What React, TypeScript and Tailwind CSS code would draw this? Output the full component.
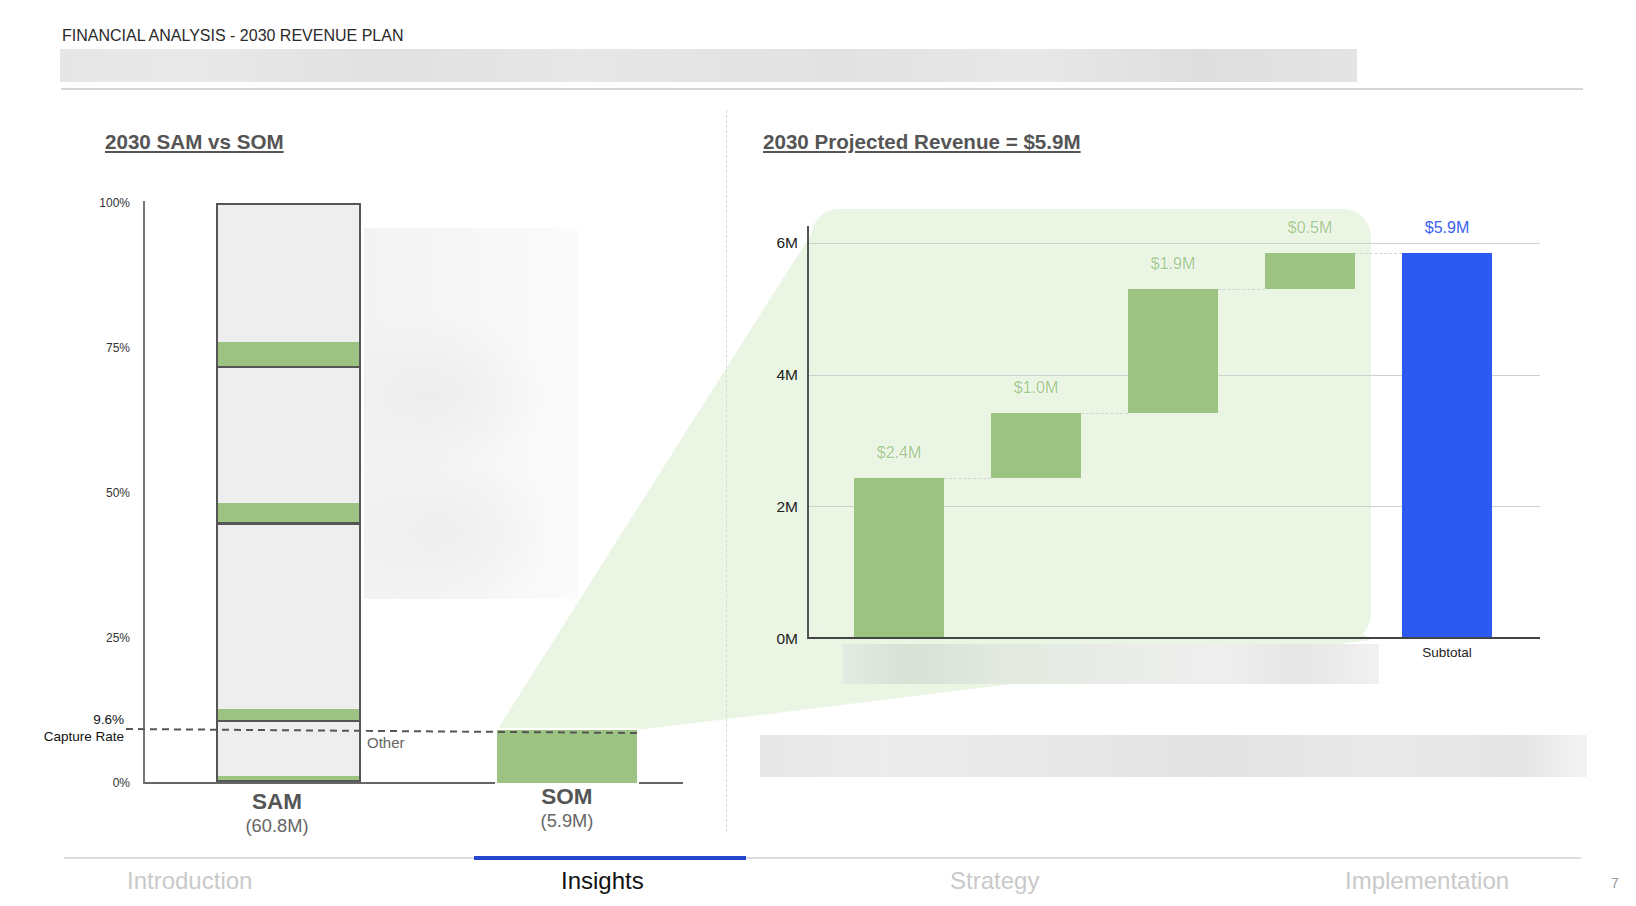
import React from "react";

function Funnel() {
  return (
    <svg
      className="pointer-events-none absolute left-0 top-0"
      width="1636"
      height="906"
      viewBox="0 0 1636 906"
    >
      <polygon points="497,730 815,228 1371,640 637,730" fill="#eaf5e4" />
      <rect x="811" y="209" width="560" height="433" rx="28" fill="#eaf5e4" />
    </svg>
  );
}

function Header() {
  return (
    <header className="pl-[60px] pt-[27px]">
      <div className="pl-[2px] text-[16px] leading-[18px] text-[#2a2a2a]">
        FINANCIAL ANALYSIS - 2030 REVENUE PLAN
      </div>
      <div className="mt-[4px] h-[33px] w-[1297px] bg-[linear-gradient(90deg,#e6e6e6_0%,#e9e9e9_10%,#e1e1e1_25%,#e7e7e7_40%,#e2e2e2_60%,#e8e8e8_75%,#dedede_88%,#e4e4e4_100%)]" />
      <div className="ml-[1px] mt-[6px] h-[2px] w-[1522px] bg-[#d6d6d6]" />
    </header>
  );
}

function SamSegment({
  boxClass,
  greenClass,
}: {
  boxClass: string;
  greenClass: string;
}) {
  return (
    <div className={`flex flex-col justify-end ${boxClass}`}>
      <div className={`bg-[#9dc383] ${greenClass}`} />
    </div>
  );
}

function LeftPanel() {
  return (
    <section className="relative w-[726px]">
      <h2 className="pl-[105px] pt-[40px] text-[20.6px] font-bold leading-[24px] text-[#555] underline">
        2030 SAM vs SOM
      </h2>

      <div className="mt-[42px] flex items-start">
        {/* y labels */}
        <div className="flex h-[588px] w-[130px] flex-col items-end text-[12px] leading-[14px] text-[#333]">
          <div>100%</div>
          <div className="mt-[131px]">75%</div>
          <div className="mt-[131px]">50%</div>
          <div className="mt-[131px]">25%</div>
          <div className="mr-[6px] mt-[67px] text-[13.5px] leading-[16px] text-[#111]">9.6%</div>
          <div className="mr-[6px] mt-[1px] whitespace-nowrap text-[13.5px] leading-[16px] text-[#111]">
            Capture Rate
          </div>
          <div className="mt-[31px]">0%</div>
        </div>

        {/* plot */}
        <div className="ml-[13px] mt-[5px] flex h-[583px] w-[540px] items-end border-b-2 border-l-2 border-b-[#666] border-l-[#777]">
          {/* SAM stacked bar */}
          <div className="ml-[71px] flex h-[579px] w-[145px] shrink-0 flex-col border-2 border-[#555] bg-[#eeeeee]">
            <SamSegment boxClass="h-[163px] border-b-2 border-[#555]" greenClass="h-[24px]" />
            <SamSegment boxClass="h-[157px] border-b-[3px] border-[#555]" greenClass="h-[19px]" />
            <SamSegment boxClass="h-[197px] border-b-2 border-[#555]" greenClass="h-[11px]" />
            <SamSegment boxClass="h-[58px]" greenClass="h-[4px]" />
          </div>

          {/* placeholder + Other */}
          <div className="flex w-[134px] shrink-0 flex-col self-stretch">
            <div className="ml-[3px] mt-[27px] h-[371px] w-[214px] shrink-0 bg-[radial-gradient(ellipse_55%_22%_at_30%_45%,#eceeec,transparent),radial-gradient(ellipse_55%_22%_at_35%_82%,#edefed,transparent),linear-gradient(90deg,#f2f3f2,#f6f7f6_55%,#fbfbfb)]" />
            <div className="mb-[30px] ml-[6px] mt-auto text-[15px] leading-[18px] text-[#666]">Other</div>
          </div>

          {/* SOM bar */}
          <div className="mb-[-3px] h-[57px] w-[144px] shrink-0 border-2 border-white bg-[#9dc383]" />
        </div>
      </div>

      {/* category labels */}
      <div className="flex items-start">
        <div className="ml-[197px] mt-[5px] flex w-[160px] flex-col items-center">
          <div className="text-[22.5px] font-bold leading-[26px] text-[#555]">SAM</div>
          <div className="text-[18.3px] leading-[22px] text-[#666]">(60.8M)</div>
        </div>
        <div className="ml-[130px] flex w-[160px] flex-col items-center">
          <div className="text-[22.5px] font-bold leading-[26px] text-[#555]">SOM</div>
          <div className="text-[18.3px] leading-[22px] text-[#666]">(5.9M)</div>
        </div>
      </div>

      {/* capture-rate dashed line */}
      <svg className="pointer-events-none absolute left-0 top-0" width="726" height="760">
        <line x1="126" y1="639" x2="638" y2="643" stroke="#555" strokeWidth="2" strokeDasharray="7 5" />
      </svg>
    </section>
  );
}

function WaterfallCol({
  label,
  labelClass,
  barClass,
  baseClass,
  connector,
}: {
  label: string;
  labelClass: string;
  barClass: string;
  baseClass: string;
  connector: boolean;
}) {
  return (
    <div className="flex w-[90px] flex-col items-center">
      <div className={`mb-[16px] whitespace-nowrap text-[16px] leading-[18px] ${labelClass}`}>{label}</div>
      <div className={`relative w-[90px] ${barClass}`}>
        {connector && (
          <div className="absolute left-full top-0 w-[47px] border-t-[1.5px] border-dashed border-[#d4d4d4]" />
        )}
      </div>
      <div className={baseClass} />
    </div>
  );
}

const greenLabel = "text-[#a3ca8d] [text-shadow:0_0_2px_#fff,0_0_2px_#fff]";

function RightPanel() {
  return (
    <section className="w-[909px]">
      <h2 className="pl-[36px] pt-[40px] text-[20.6px] font-bold leading-[24px] text-[#555] underline">
        2030 Projected Revenue = $5.9M
      </h2>

      <div className="mt-[65px] flex items-start">
        {/* y labels */}
        <div className="flex h-[420px] w-[71px] flex-col items-end gap-[114px] pt-[15px] text-[15.5px] leading-[18px] text-[#222]">
          <div>6M</div>
          <div>4M</div>
          <div>2M</div>
          <div>0M</div>
        </div>

        {/* plot */}
        <div className="relative ml-[9px] mt-[7px] h-[413px] w-[733px] border-b-2 border-l-2 border-b-[#444] border-l-[#555]">
          <div className="flex flex-col pt-[16.5px]">
            <div className="h-[132px] border-t-[1.5px] border-[#cfcfcf]" />
            <div className="h-[131px] border-t-[1.5px] border-[#cfcfcf]" />
            <div className="border-t-[1.5px] border-[#cfcfcf]" />
          </div>

          <div className="absolute bottom-0 left-[45px] flex items-end gap-[47px]">
            <WaterfallCol label="$2.4M" labelClass={greenLabel} barClass="h-[159px] bg-[#9dc383]" baseClass="h-0" connector />
            <WaterfallCol label="$1.0M" labelClass={greenLabel} barClass="h-[65px] bg-[#9dc383]" baseClass="h-[159px]" connector />
            <WaterfallCol label="$1.9M" labelClass={greenLabel} barClass="h-[124px] bg-[#9dc383]" baseClass="h-[224px]" connector />
            <WaterfallCol label="$0.5M" labelClass={greenLabel} barClass="h-[36px] bg-[#9dc383]" baseClass="h-[348px]" connector />
            <WaterfallCol label="$5.9M" labelClass="text-[#3a62f0]" barClass="h-[384px] bg-[#2c5af0]" baseClass="h-0" connector={false} />
          </div>
        </div>
      </div>

      <div className="flex items-start pl-[116px]">
        <div className="mt-[5px] h-[40px] w-[536px] bg-[linear-gradient(90deg,#e4ebe2_0%,#d7e1d4_12%,#e2e9df_28%,#e9ece8_50%,#eeefee_70%,#e6e6e6_85%,#f1f1f1_100%)]" />
        <div className="ml-[18px] mt-[6px] w-[100px] text-center text-[13.5px] leading-[16px] text-[#222]">Subtotal</div>
      </div>

      <div className="ml-[33px] mt-[51px] h-[42px] w-[827px] bg-[linear-gradient(90deg,#e7e7e7_0%,#ececec_15%,#e8e8e8_35%,#e3e3e3_55%,#e9e9e9_75%,#e5e5e5_92%,#f3f3f3_100%)]" />
    </section>
  );
}

function Footer() {
  return (
    <footer className="pl-[64px] pt-[7px]">
      <div className="relative h-[1.5px] w-[1517px] bg-[#dddddd]">
        <div className="absolute left-[410px] top-[-1px] h-[4px] w-[272px] bg-[#2346cc]" />
      </div>
      <div className="mt-[8.5px] flex items-start text-[24px] leading-[28px]">
        <div className="w-[410px] pl-[63px] text-[#c9c9c9]">Introduction</div>
        <div className="w-[272px] pl-[87px] text-[#111]">Insights</div>
        <div className="w-[395px] pl-[204px] text-[#c9c9c9]">Strategy</div>
        <div className="w-[470px] pl-[204px] text-[#c9c9c9]">Implementation</div>
        <div className="pt-[7px] text-[14px] leading-[18px] text-[#999]">7</div>
      </div>
    </footer>
  );
}

export default function App() {
  return (
    <div className="relative h-[906px] w-[1636px] overflow-hidden bg-white font-['Liberation_Sans',Arial,sans-serif] text-[#333]">
      <Funnel />
      <div className="relative flex h-full flex-col">
        <Header />
        <main className="flex h-[760px]">
          <LeftPanel />
          <div className="mt-[20px] h-[722px] w-0 border-l border-dashed border-[#d9d9d9]" />
          <RightPanel />
        </main>
        <Footer />
      </div>
    </div>
  );
}
